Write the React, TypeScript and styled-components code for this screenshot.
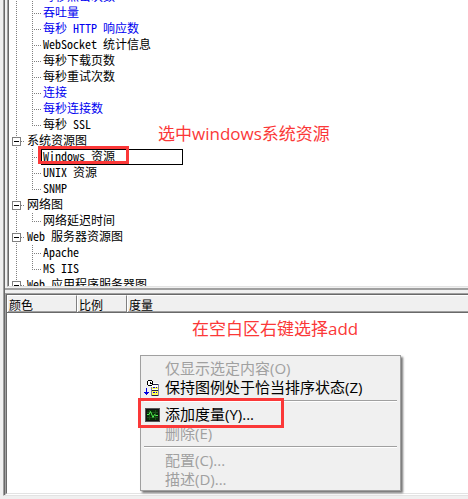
import React from 'react';
import styled, { createGlobalStyle, css } from 'styled-components';

const Global = createGlobalStyle`
  * { box-sizing: border-box; }
  html, body, #root { height: 100%; }
  body {
    margin: 0;
    overflow: hidden;
    background: #f0f0f0;
    color: #000;
    font-family: "Noto Sans CJK SC", sans-serif;
  }
  button { font: inherit; }
`;

const Page = styled.main`
  height: 100%;
  padding: 0 0 3px 3px;
`;

const Panel = styled.div`
  height: 100%;
  display: flex;
  flex-direction: column;
  border-left: 1px solid #a0a0a0;
  border-bottom: 1px solid #e3e3e3;
  box-shadow: inset 1px 0 #696969;
`;

const TreePane = styled.section`
  flex: none;
  position: relative;
  padding-left: 3px;
`;

const TreeView = styled.div`
  height: 287px;
  overflow: hidden;
  background: #fff;
  border-left: 1px solid #a0a0a0;
  border-bottom: 1px solid #e3e3e3;
  box-shadow: inset 1px 0 #696969;
  padding-left: 1px;
`;

const Tree = styled.ul`
  list-style: none;
  margin: -11px 0 0;
  padding: 0;
  font-size: 12px;
  line-height: 16px;
`;

const Branch = styled.ul`
  list-style: none;
  margin: 0;
  padding: 0;
`;

const Row = styled.div`
  display: flex;
  height: 16px;
  white-space: pre;
`;

const Guide = styled.svg`
  flex: none;
  display: block;
`;

const Label = styled.button<{ $link?: boolean; $selected?: boolean }>`
  flex: none;
  position: relative;
  height: 16px;
  padding: 0 2px 2px;
  border: 0;
  background: none;
  text-align: left;
  line-height: 14px;
  white-space: pre;
  color: ${p => (p.$link ? '#0000f0' : '#000')};
  ${p => p.$selected && css`
    width: 142px;
    box-shadow: inset 0 0 0 1px #000;
  `}
`;

const Latin = styled.span`
  font-family: "Noto Sans Mono CJK SC", "Liberation Mono", monospace;
  font-size: 12px;
`;

const Mark = styled.span<{ $kind: 'tree' | 'menu' }>`
  position: absolute;
  pointer-events: none;
  border: 3px solid #fb3838;
  ${p => p.$kind === 'tree'
    ? css`left: -3px; top: -3px; width: 91px; height: 18px;`
    : css`left: -6px; top: -7px; width: 146px; height: 30px; z-index: 1;`}
`;

const Note = styled.p<{ $at: 'tree' | 'legend' }>`
  position: absolute;
  margin: 0;
  color: #fb3838;
  font-family: "Open Sans", "Noto Sans CJK SC", sans-serif;
  font-size: 17px;
  line-height: 24px;
  white-space: nowrap;
  ${p => (p.$at === 'tree' ? css`left: 154px; top: 122px;` : css`left: 185px; top: 4px;`)}
`;

const LegendPane = styled.section`
  flex: 1;
  display: flex;
  flex-direction: column;
  margin: 1px 0 0 1px;
  border-top: 2px solid #a0a0a0;
`;

const Frame = styled.div`
  flex: 1;
  margin-top: 3px;
  display: flex;
  flex-direction: column;
  border-left: 1px solid #a0a0a0;
  border-top: 1px solid #a0a0a0;
  border-bottom: 1px solid #fff;
`;

const Inner = styled.div`
  flex: 1;
  display: flex;
  flex-direction: column;
  border-left: 1px solid #696969;
  border-top: 1px solid #696969;
  border-bottom: 1px solid #e3e3e3;
`;

const Table = styled.table`
  width: 100%;
  table-layout: fixed;
  border-collapse: separate;
  border-spacing: 0;
  font-size: 12px;
  line-height: 15px;
`;

const Head = styled.th<{ $width?: number }>`
  ${p => p.$width && css`width: ${p.$width}px;`}
  height: 18px;
  padding: 0 2px;
  text-align: left;
  font-weight: 400;
  background: #f0f0f0;
  border-top: 1px solid #fff;
  border-bottom: 1px solid #696969;
  border-right: 1px solid #808080;
  box-shadow: inset 1px 0 #fff, inset 0 -1px #a0a0a0;
  &:last-child { border-right: 0; }
`;

const Body = styled.div`
  position: relative;
  flex: 1;
  background: #fff;
`;

const Menu = styled.div`
  position: absolute;
  left: 133px;
  top: 42px;
  width: 261px;
  padding: 3px 3px 1px;
  background: #f0f0f0;
  border: 1px solid #a0a0a0;
  box-shadow: 2px 2px 2px #777;
  font-family: "Open Sans", "Noto Sans CJK SC", sans-serif;
  font-size: 15px;
`;

const Item = styled.button`
  position: relative;
  width: 100%;
  height: 19px;
  padding: 0;
  border: 0;
  background: none;
  color: #000;
  display: grid;
  grid-template-columns: 21px 1fr;
  grid-template-rows: 19px;
  align-items: center;
  text-align: left;
  line-height: 19px;
  white-space: nowrap;
  &:disabled { color: #a0a0a0; }
`;

const Separator = styled.hr`
  margin: 3px 0;
  border: 0;
  border-top: 1px solid #a0a0a0;
  border-bottom: 1px solid #fff;
`;

type Node = { label: string; link?: boolean; selected?: boolean };
type Group = { label?: string; children: Node[] };

const groups: Group[] = [
  {
    children: [
      { label: '每秒点击次数', link: true },
      { label: '吞吐量', link: true },
      { label: '每秒 HTTP 响应数', link: true },
      { label: 'WebSocket 统计信息' },
      { label: '每秒下载页数' },
      { label: '每秒重试次数' },
      { label: '连接', link: true },
      { label: '每秒连接数', link: true },
      { label: '每秒 SSL' },
    ],
  },
  {
    label: '系统资源图',
    children: [{ label: 'Windows 资源', selected: true }, { label: 'UNIX 资源' }, { label: 'SNMP' }],
  },
  { label: '网络图', children: [{ label: '网络延迟时间' }] },
  { label: 'Web 服务器资源图', children: [{ label: 'Apache' }, { label: 'MS IIS' }] },
  { label: 'Web 应用程序服务器图', children: [] },
];

const Mixed = ({ text }: { text: string }) => (
  <>
    {text.split(/([\x20-\x7e]+)/).filter(Boolean).map((part, i) =>
      /^[\x20-\x7e]/.test(part) ? <Latin key={i}>{part}</Latin> : <span key={i}>{part}</span>,
    )}
  </>
);

const dots = { stroke: '#808080', strokeDasharray: '1 1', fill: 'none', shapeRendering: 'crispEdges' as const };

const LeafGuide = ({ last }: { last: boolean }) => (
  <Guide width="32" height="16" aria-hidden="true">
    <path d="M7.5 0V16" {...dots} />
    <path d={last ? 'M23.5 0V9' : 'M23.5 0V16'} {...dots} />
    <path d="M23 8.5H32" {...dots} />
  </Guide>
);

const GroupGuide = () => (
  <Guide width="16" height="16" aria-hidden="true">
    <path d="M7.5 0V16M12 8.5H16" {...dots} />
    <rect x="3.5" y="4.5" width="8" height="8" fill="#fff" stroke="#808080" />
    <path d="M5 8.5H10" stroke="#000" />
  </Guide>
);

const SortIcon = () => (
  <svg width="16" height="16" shapeRendering="crispEdges" aria-hidden="true">
    <path d="M2 8H3V12H5V13H4V14H3V15H2V14H1V13H0V12H2Z" fill="#0000e0" />
    <path d="M7 3H15V16H7Z" fill="#fff" />
    <path d="M8 7H14V9H8ZM8 11H14V15H8Z" fill="#ffff50" />
    <path d="M9 4.5H15M7 10.5H15M7 15.5H15" stroke="#202040" />
    <path d="M7.5 7V16M14.5 4V16" stroke="#8080a0" />
    <path d="M9 7.5H13M9 12.5H13" stroke="#0000e0" strokeDasharray="2 1" />
    <path d="M4 0H8V1H9V5H8V6H4V5H3V1H4Z" fill="#000" />
    <path d="M4 1H8V5H4Z" fill="#fff" />
    <path d="M6 2V4H8V3H7V2Z" fill="#000" />
  </svg>
);

const MeasureIcon = () => (
  <svg width="16" height="14" aria-hidden="true">
    <rect x="1.5" y=".5" width="14" height="13" fill="#063006" stroke="#555" />
    <rect x="2.5" y="1.5" width="12" height="11" fill="none" stroke="#111" />
    <path d="M3 4.5H14M3 9.5H14M5.5 2V12M11.5 2V12" stroke="#1c4c1c" />
    <path d="M3 6.5H5L6.5 3.5L9 9.5L10.5 6.5L12 7.5H14" fill="none" stroke="#50f050" />
  </svg>
);

export default function App() {
  return (
    <>
      <Global />
      <Page>
        <Panel>
          <TreePane>
            <TreeView>
              <Tree>
                {groups.map((group, g) => (
                  <li key={g}>
                    {group.label && (
                      <Row>
                        <GroupGuide />
                        <Label><Mixed text={group.label} /></Label>
                      </Row>
                    )}
                    <Branch>
                      {group.children.map((node, i) => (
                        <li key={node.label}>
                          <Row>
                            <LeafGuide last={i === group.children.length - 1} />
                            <Label $link={node.link} $selected={node.selected}>
                              <Mixed text={node.label} />
                              {node.selected && <Mark $kind="tree" />}
                            </Label>
                          </Row>
                        </li>
                      ))}
                    </Branch>
                  </li>
                ))}
              </Tree>
            </TreeView>
            <Note $at="tree">选中windows系统资源</Note>
          </TreePane>
          <LegendPane>
            <Frame>
              <Inner>
                <Table>
                  <thead>
                    <tr>
                      <Head $width={70}>颜色</Head>
                      <Head $width={50}>比例</Head>
                      <Head>度量</Head>
                    </tr>
                  </thead>
                </Table>
                <Body>
                  <Note $at="legend">在空白区右键选择add</Note>
                  <Menu role="menu">
                    <Item role="menuitem" disabled><span />仅显示选定内容(O)</Item>
                    <Item role="menuitem"><SortIcon />保持图例处于恰当排序状态(Z)</Item>
                    <Separator />
                    <Item role="menuitem"><MeasureIcon />添加度量(Y)...<Mark $kind="menu" /></Item>
                    <Item role="menuitem" disabled><span />删除(E)</Item>
                    <Separator />
                    <Item role="menuitem" disabled><span />配置(C)...</Item>
                    <Item role="menuitem" disabled><span />描述(D)...</Item>
                  </Menu>
                </Body>
              </Inner>
            </Frame>
          </LegendPane>
        </Panel>
      </Page>
    </>
  );
}
